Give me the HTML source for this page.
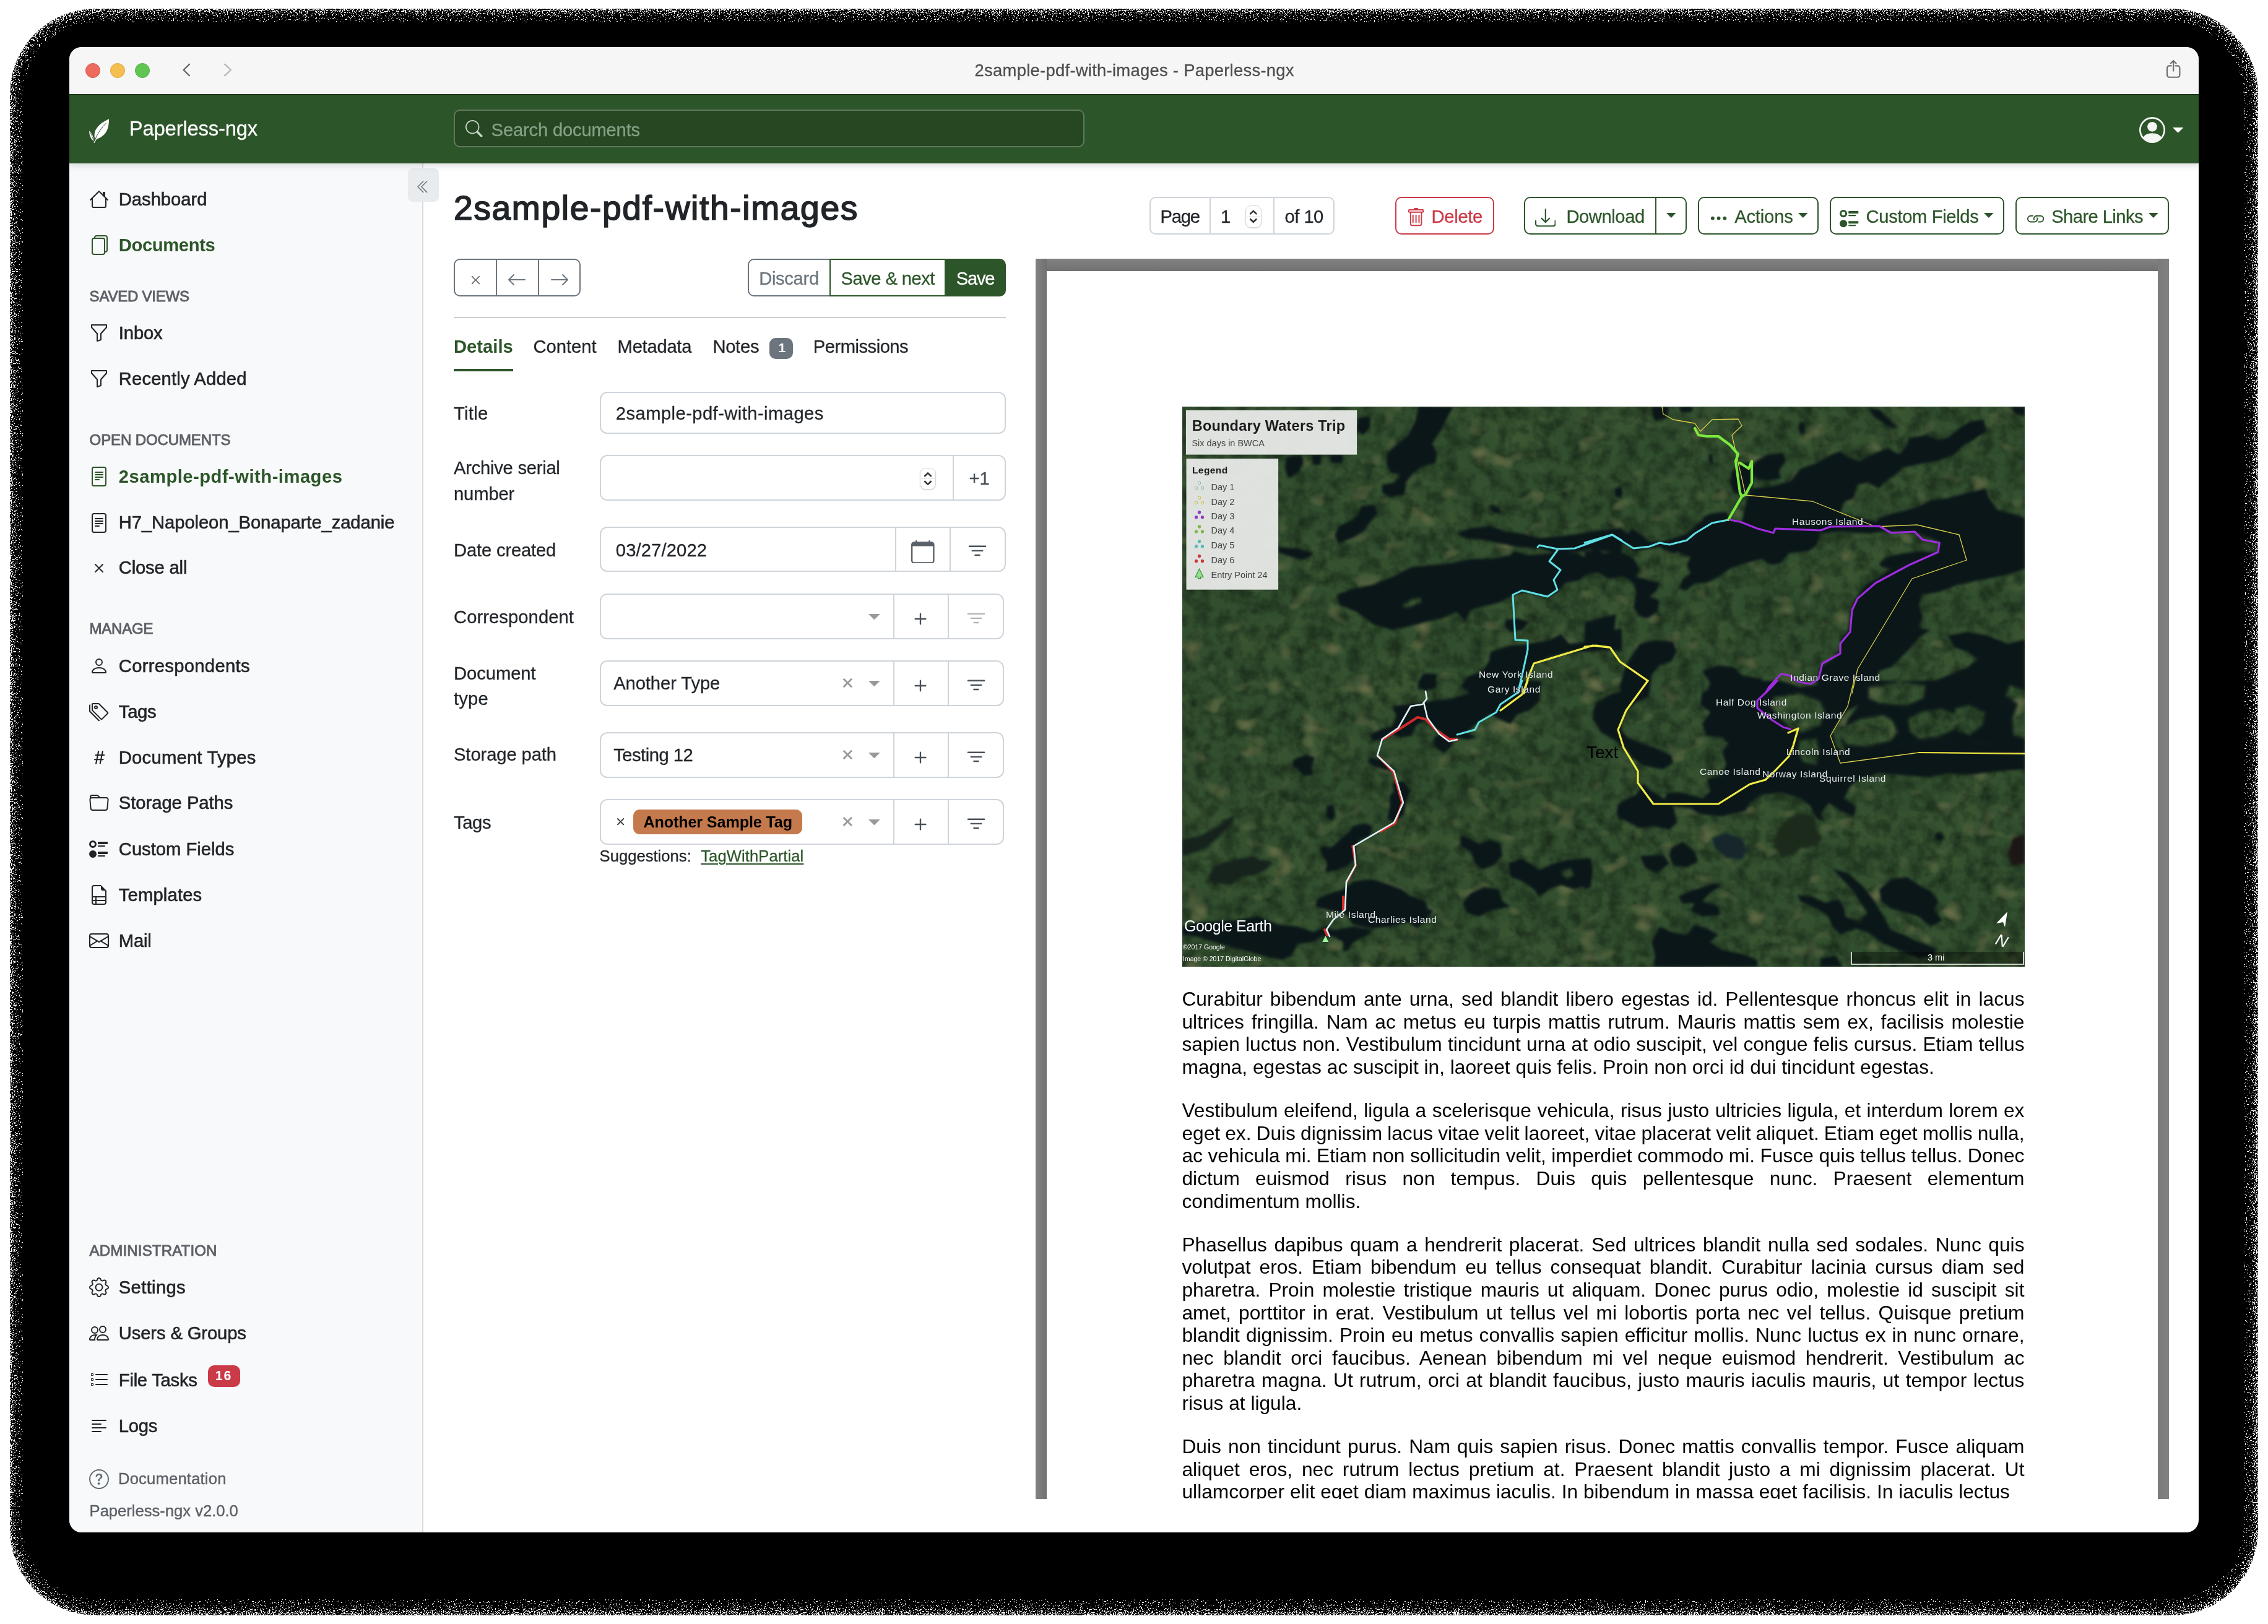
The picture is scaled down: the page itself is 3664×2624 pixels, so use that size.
<!DOCTYPE html>
<html><head><meta charset="utf-8"><title>2sample-pdf-with-images - Paperless-ngx</title><style>
*{margin:0;padding:0}
html,body{width:3664px;height:2624px;background:#fff;overflow:hidden}
body{font-family:"Liberation Sans",sans-serif;position:relative}
#sh{position:absolute;left:0;top:0;width:3664px;height:2624px}
#wo{position:absolute;left:112px;top:76px;width:3440px;height:2400px;border-radius:20px;overflow:hidden;background:#fff}
#win{position:absolute;left:0;top:0;width:1720px;height:1200px;zoom:2;will-change:transform}
.a{position:absolute;display:block}
.t{position:absolute;white-space:pre;line-height:20px}
.p{position:absolute;white-space:nowrap;font-size:15.85px;line-height:18px;height:18px;color:#000;overflow:visible}
svg text{font-family:"Liberation Sans",sans-serif}
</style></head><body>
<svg id="sh" viewBox="0 0 3664 2624"><defs><clipPath id="cp"><rect x="16" y="14" width="3632" height="2596" rx="138" ry="138"/></clipPath><filter id="dz" filterUnits="userSpaceOnUse" x="0" y="0" width="3664" height="2624" color-interpolation-filters="sRGB"><feGaussianBlur in="SourceAlpha" stdDeviation="10 11" result="b"/><feTurbulence type="fractalNoise" baseFrequency="0.55" numOctaves="2" seed="4" result="n"/><feColorMatrix in="n" type="matrix" values="0 0 0 0 0 0 0 0 0 0 0 0 0 0 0 2.600 0 0 0 -0.800" result="na"/><feComposite in="b" in2="na" operator="arithmetic" k1="0" k2="1" k3="1" k4="-1" result="s"/><feColorMatrix in="s" type="matrix" values="0 0 0 0 0 0 0 0 0 0 0 0 0 0 0 0 0 0 1000 0"/></filter></defs><g clip-path="url(#cp)"><rect x="16" y="14" width="3632" height="2596" rx="138" ry="138" fill="#000" filter="url(#dz)"/></g><rect x="37" y="36" width="3588" height="2548" rx="120" ry="120" fill="#000"/></svg>
<div id="wo"><div id="win">
<div class="a" style="left:0px;top:0px;width:1720px;height:38px;background:#f6f6f6"></div>
<div class="a" style="left:13px;top:13px;width:12px;height:12px;background:#ed6a5e;border-radius:50%;border:.5px solid #d8594d;box-sizing:border-box"></div>
<div class="a" style="left:33px;top:13px;width:12px;height:12px;background:#f5bf4f;border-radius:50%;border:.5px solid #dba841;box-sizing:border-box"></div>
<div class="a" style="left:53px;top:13px;width:12px;height:12px;background:#61c554;border-radius:50%;border:.5px solid #50ad42;box-sizing:border-box"></div>
<svg class="a" style="left:90.500px;top:12px;width:9px;height:15px" viewBox="0 0 9 15"><path d="M6.500 1.900L1.800 6.500l4.700 4.600" fill="none" stroke="#616161" stroke-width="1.150" stroke-linecap="round" stroke-linejoin="round"/></svg>
<svg class="a" style="left:123.500px;top:12px;width:9px;height:15px" viewBox="0 0 9 15"><path d="M2.100 1.900L7 6.500l-4.900 4.600" fill="none" stroke="#b4b4b4" stroke-width="1.150" stroke-linecap="round" stroke-linejoin="round"/></svg>
<span class="t" style="left:731.30px;top:8.80px;font-size:13.7px;color:#4d4d4d;letter-spacing:0.139px;-webkit-text-stroke:0.14px #4d4d4d;">2sample-pdf-with-images - Paperless-ngx</span>
<svg class="a" style="left:1692px;top:9px;width:15px;height:19px" viewBox="0 0 15 19"><path d="M5.900 6.200H4.200A1.700 1.700 0 0 0 2.500 7.900v5.750a1.700 1.700 0 0 0 1.700 1.700h6.800a1.700 1.700 0 0 0 1.700-1.700V7.900a1.700 1.700 0 0 0-1.700-1.700H9.300M7.600 10.300V2.300M5.400 4.200l2.200-2.200 2.200 2.200" fill="none" stroke="#6e6e6e" stroke-width="1.050" stroke-linecap="round" stroke-linejoin="round"/></svg>
<div class="a" style="left:0px;top:94px;width:286.2px;height:1106px;background:#f8f9fa;border-right:1px solid #d9dcdf;box-sizing:border-box"></div>
<svg class="a" style="left:16.0px;top:115.1px;width:16px;height:16px;" viewBox="0 0 16 16" fill="#212529"><path d="M8.707 1.5a1 1 0 0 0-1.414 0L.646 8.146a.5.5 0 0 0 .708.708L2 8.207V13.5A1.5 1.5 0 0 0 3.5 15h9a1.5 1.5 0 0 0 1.5-1.5V8.207l.646.647a.5.5 0 0 0 .708-.708L13 5.793V2.5a.5.5 0 0 0-.5-.5h-1a.5.5 0 0 0-.5.5v1.293L8.707 1.5ZM13 7.207V13.5a.5.5 0 0 1-.5.5h-9a.5.5 0 0 1-.5-.5V7.207l5-5 5 5Z"/></svg>
<span class="t" style="left:39.90px;top:113.00px;font-size:14.6px;color:#212529;letter-spacing:-0.012px;-webkit-text-stroke:0.3px #212529;">Dashboard</span>
<svg class="a" style="left:16.0px;top:152.0px;width:16px;height:16px;" viewBox="0 0 16 16" fill="#2c5529"><path d="M13 0H6a2 2 0 0 0-2 2 2 2 0 0 0-2 2v10a2 2 0 0 0 2 2h7a2 2 0 0 0 2-2 2 2 0 0 0 2-2V2a2 2 0 0 0-2-2zm0 13V4a2 2 0 0 0-2-2H5a1 1 0 0 1 1-1h7a1 1 0 0 1 1 1v10a1 1 0 0 1-1 1zM3 4a1 1 0 0 1 1-1h7a1 1 0 0 1 1 1v10a1 1 0 0 1-1 1H4a1 1 0 0 1-1-1V4z"/></svg>
<span class="t" style="left:39.90px;top:149.90px;font-size:14.6px;color:#2c5529;font-weight:700;letter-spacing:-0.185px;">Documents</span>
<span class="t" style="left:16.30px;top:191.30px;font-size:12.0px;color:#5d6167;letter-spacing:-0.109px;-webkit-text-stroke:0.45px #5d6167;">SAVED VIEWS</span>
<svg class="a" style="left:16.0px;top:223.1px;width:16px;height:16px;" viewBox="0 0 16 16" fill="#212529"><path d="M1.5 1.5A.5.5 0 0 1 2 1h12a.5.5 0 0 1 .5.5v2a.5.5 0 0 1-.128.334L10 8.692V13.5a.5.5 0 0 1-.342.474l-3 1A.5.5 0 0 1 6 14.5V8.692L1.628 3.834A.5.5 0 0 1 1.5 3.5v-2zm1 .5v1.308l4.372 4.858A.5.5 0 0 1 7 8.5v5.306l2-.666V8.5a.5.5 0 0 1 .128-.334L13.5 3.308V2h-11z"/></svg>
<span class="t" style="left:39.90px;top:221.00px;font-size:14.6px;color:#212529;letter-spacing:-0.061px;-webkit-text-stroke:0.3px #212529;">Inbox</span>
<svg class="a" style="left:16.0px;top:260.1px;width:16px;height:16px;" viewBox="0 0 16 16" fill="#212529"><path d="M1.5 1.5A.5.5 0 0 1 2 1h12a.5.5 0 0 1 .5.5v2a.5.5 0 0 1-.128.334L10 8.692V13.5a.5.5 0 0 1-.342.474l-3 1A.5.5 0 0 1 6 14.5V8.692L1.628 3.834A.5.5 0 0 1 1.5 3.5v-2zm1 .5v1.308l4.372 4.858A.5.5 0 0 1 7 8.5v5.306l2-.666V8.5a.5.5 0 0 1 .128-.334L13.5 3.308V2h-11z"/></svg>
<span class="t" style="left:39.90px;top:258.00px;font-size:14.6px;color:#212529;letter-spacing:0.083px;-webkit-text-stroke:0.3px #212529;">Recently Added</span>
<span class="t" style="left:16.30px;top:307.30px;font-size:12.0px;color:#5d6167;letter-spacing:-0.056px;-webkit-text-stroke:0.45px #5d6167;">OPEN DOCUMENTS</span>
<svg class="a" style="left:16.0px;top:339.20000000000005px;width:16px;height:16px;" viewBox="0 0 16 16" fill="#2c5529"><path d="M5 4a.5.5 0 0 0 0 1h6a.5.5 0 0 0 0-1H5zm-.5 2.5A.5.5 0 0 1 5 6h6a.5.5 0 0 1 0 1H5a.5.5 0 0 1-.5-.5zM5 8a.5.5 0 0 0 0 1h6a.5.5 0 0 0 0-1H5zm0 2a.5.5 0 0 0 0 1h3a.5.5 0 0 0 0-1H5z"/><path d="M2 2a2 2 0 0 1 2-2h8a2 2 0 0 1 2 2v12a2 2 0 0 1-2 2H4a2 2 0 0 1-2-2V2zm10-1H4a1 1 0 0 0-1 1v12a1 1 0 0 0 1 1h8a1 1 0 0 0 1-1V2a1 1 0 0 0-1-1z"/></svg>
<span class="t" style="left:39.90px;top:337.10px;font-size:14.6px;color:#2c5529;font-weight:700;letter-spacing:0.245px;">2sample-pdf-with-images</span>
<svg class="a" style="left:16.0px;top:376.3px;width:16px;height:16px;" viewBox="0 0 16 16" fill="#212529"><path d="M5 4a.5.5 0 0 0 0 1h6a.5.5 0 0 0 0-1H5zm-.5 2.5A.5.5 0 0 1 5 6h6a.5.5 0 0 1 0 1H5a.5.5 0 0 1-.5-.5zM5 8a.5.5 0 0 0 0 1h6a.5.5 0 0 0 0-1H5zm0 2a.5.5 0 0 0 0 1h3a.5.5 0 0 0 0-1H5z"/><path d="M2 2a2 2 0 0 1 2-2h8a2 2 0 0 1 2 2v12a2 2 0 0 1-2 2H4a2 2 0 0 1-2-2V2zm10-1H4a1 1 0 0 0-1 1v12a1 1 0 0 0 1 1h8a1 1 0 0 0 1-1V2a1 1 0 0 0-1-1z"/></svg>
<span class="t" style="left:39.90px;top:374.20px;font-size:14.6px;color:#212529;letter-spacing:-0.040px;-webkit-text-stroke:0.3px #212529;">H7_Napoleon_Bonaparte_zadanie</span>
<svg class="a" style="left:16.0px;top:412.8px;width:16px;height:16px;" viewBox="0 0 16 16" fill="#212529"><path d="M4.646 4.646a.5.5 0 0 1 .708 0L8 7.293l2.646-2.647a.5.5 0 0 1 .708.708L8.707 8l2.647 2.646a.5.5 0 0 1-.708.708L8 8.707l-2.646 2.647a.5.5 0 0 1-.708-.708L7.293 8 4.646 5.354a.5.5 0 0 1 0-.708z"/></svg>
<span class="t" style="left:39.90px;top:410.70px;font-size:14.6px;color:#212529;letter-spacing:-0.085px;-webkit-text-stroke:0.3px #212529;">Close all</span>
<span class="t" style="left:16.30px;top:460.20px;font-size:12.0px;color:#5d6167;letter-spacing:-0.119px;-webkit-text-stroke:0.45px #5d6167;">MANAGE</span>
<svg class="a" style="left:16.0px;top:492.1px;width:16px;height:16px;" viewBox="0 0 16 16" fill="#212529"><path d="M8 8a3 3 0 1 0 0-6 3 3 0 0 0 0 6Zm2-3a2 2 0 1 1-4 0 2 2 0 0 1 4 0Zm4 8c0 1-1 1-1 1H3s-1 0-1-1 1-4 6-4 6 3 6 4Zm-1-.004c-.001-.246-.154-.986-.832-1.664C11.516 10.68 10.289 10 8 10c-2.29 0-3.516.68-4.168 1.332-.678.678-.83 1.418-.832 1.664h10Z"/></svg>
<span class="t" style="left:39.90px;top:490.00px;font-size:14.6px;color:#212529;letter-spacing:0.154px;-webkit-text-stroke:0.3px #212529;">Correspondents</span>
<svg class="a" style="left:16.0px;top:528.9px;width:16px;height:16px;" viewBox="0 0 16 16" fill="#212529"><path d="M3 2v4.586l7 7L14.586 9l-7-7H3zM2 2a1 1 0 0 1 1-1h4.586a1 1 0 0 1 .707.293l7 7a1 1 0 0 1 0 1.414l-4.586 4.586a1 1 0 0 1-1.414 0l-7-7A1 1 0 0 1 2 6.586V2z"/><path d="M5.5 5a.5.5 0 1 1 0-1 .5.5 0 0 1 0 1zm0 1a1.5 1.5 0 1 0 0-3 1.5 1.5 0 0 0 0 3zM1 7.086a1 1 0 0 0 .293.707L8.75 15.25l-.043.043a1 1 0 0 1-1.414 0l-7-7A1 1 0 0 1 0 7.586V3a1 1 0 0 1 1-1v5.086z"/></svg>
<span class="t" style="left:39.90px;top:526.80px;font-size:14.6px;color:#212529;letter-spacing:-0.132px;-webkit-text-stroke:0.3px #212529;">Tags</span>
<svg class="a" style="left:16.0px;top:565.9px;width:16px;height:16px;" viewBox="0 0 16 16" fill="#212529"><path d="M8.39 12.648a1.32 1.32 0 0 0-.015.18c0 .305.21.508.5.508.266 0 .492-.172.555-.477l.554-2.703h1.204c.421 0 .617-.234.617-.547 0-.312-.188-.53-.617-.53h-.985l.516-2.524h1.265c.43 0 .618-.227.618-.547 0-.313-.188-.524-.618-.524h-1.046l.476-2.304a1.06 1.06 0 0 0 .016-.164.51.51 0 0 0-.516-.516.54.54 0 0 0-.539.43l-.523 2.554H7.617l.477-2.304c.008-.04.015-.118.015-.164a.512.512 0 0 0-.523-.516.539.539 0 0 0-.531.43L6.53 5.484H5.414c-.43 0-.617.22-.617.532 0 .312.187.539.617.539h.906l-.515 2.523H4.609c-.421 0-.609.219-.609.531 0 .313.188.547.61.547h.976l-.516 2.492c-.008.04-.015.125-.015.18 0 .305.21.508.5.508.265 0 .492-.172.554-.477l.555-2.703h2.242l-.515 2.492zm-1-6.109h2.266l-.515 2.563H6.859l.532-2.563z"/></svg>
<span class="t" style="left:39.90px;top:563.80px;font-size:14.6px;color:#212529;letter-spacing:0.118px;-webkit-text-stroke:0.3px #212529;">Document Types</span>
<svg class="a" style="left:16.0px;top:602.8000000000001px;width:16px;height:16px;" viewBox="0 0 16 16" fill="#212529"><path d="M.54 3.87.5 3a2 2 0 0 1 2-2h3.672a2 2 0 0 1 1.414.586l.828.828A2 2 0 0 0 9.828 3h3.982a2 2 0 0 1 1.992 2.181l-.637 7A2 2 0 0 1 13.174 14H2.826a2 2 0 0 1-1.991-1.819l-.637-7a1.99 1.99 0 0 1 .342-1.31zM2.19 4a1 1 0 0 0-.996 1.09l.637 7a1 1 0 0 0 .995.91h10.348a1 1 0 0 0 .995-.91l.637-7A1 1 0 0 0 13.81 4H2.19zm4.69-1.707A1 1 0 0 0 6.172 2H2.5a1 1 0 0 0-1 .981l.006.139C1.72 3.042 1.95 3 2.19 3h5.396l-.707-.707z"/></svg>
<span class="t" style="left:39.90px;top:600.70px;font-size:14.6px;color:#212529;letter-spacing:-0.015px;-webkit-text-stroke:0.3px #212529;">Storage Paths</span>
<svg class="a" style="left:16.0px;top:640.1px;width:16px;height:16px;" viewBox="0 0 16 16" fill="#212529"><path d="M7 2.5a.5.5 0 0 1 .5-.5h7a.5.5 0 0 1 .5.5v1a.5.5 0 0 1-.5.5h-7a.5.5 0 0 1-.5-.5v-1zM0 12a3 3 0 1 1 6 0 3 3 0 0 1-6 0zm7-1.5a.5.5 0 0 1 .5-.5h7a.5.5 0 0 1 .5.5v1a.5.5 0 0 1-.5.5h-7a.5.5 0 0 1-.5-.5v-1zm0-5a.5.5 0 0 1 .5-.5h5a.5.5 0 0 1 0 1h-5a.5.5 0 0 1-.5-.5zm0 8a.5.5 0 0 1 .5-.5h5a.5.5 0 0 1 0 1h-5a.5.5 0 0 1-.5-.5zM3 1a3 3 0 1 0 0 6 3 3 0 0 0 0-6zm0 4.500a1.500 1.500 0 1 1 0-3 1.500 1.500 0 0 1 0 3z"/></svg>
<span class="t" style="left:39.90px;top:638.00px;font-size:14.6px;color:#212529;letter-spacing:0.003px;-webkit-text-stroke:0.3px #212529;">Custom Fields</span>
<svg class="a" style="left:16.0px;top:677.1px;width:16px;height:16px;" viewBox="0 0 16 16" fill="#212529"><path d="M14 14V4.5L9.500 0H4a2 2 0 0 0-2 2v12a2 2 0 0 0 2 2h8a2 2 0 0 0 2-2zM9.500 3A1.500 1.500 0 0 0 11 4.500h2V9H3V2a1 1 0 0 1 1-1h5.500v2zM3 12v-2h2v2H3zm0 1h2v2H4a1 1 0 0 1-1-1v-1zm3 2v-2h7v1a1 1 0 0 1-1 1H6zm7-3H6v-2h7v2z"/></svg>
<span class="t" style="left:39.90px;top:675.00px;font-size:14.6px;color:#212529;letter-spacing:0.087px;-webkit-text-stroke:0.3px #212529;">Templates</span>
<svg class="a" style="left:16.0px;top:714.0px;width:16px;height:16px;" viewBox="0 0 16 16" fill="#212529"><path d="M0 4a2 2 0 0 1 2-2h12a2 2 0 0 1 2 2v8a2 2 0 0 1-2 2H2a2 2 0 0 1-2-2V4Zm2-1a1 1 0 0 0-1 1v.217l7 4.200 7-4.200V4a1 1 0 0 0-1-1H2Zm13 2.383-4.708 2.825L15 11.105V5.383Zm-.034 6.876-5.640-3.471L8 9.583l-1.326-.795-5.640 3.470A1 1 0 0 0 2 13h12a1 1 0 0 0 .966-.741ZM1 11.105l4.708-2.897L1 5.383v5.722Z"/></svg>
<span class="t" style="left:39.90px;top:711.90px;font-size:14.6px;color:#212529;letter-spacing:-0.116px;-webkit-text-stroke:0.3px #212529;">Mail</span>
<span class="t" style="left:16.30px;top:962.30px;font-size:12.0px;color:#5d6167;letter-spacing:0.087px;-webkit-text-stroke:0.45px #5d6167;">ADMINISTRATION</span>
<svg class="a" style="left:16.0px;top:994.1px;width:16px;height:16px;" viewBox="0 0 16 16" fill="#212529"><path d="M8 4.754a3.246 3.246 0 1 0 0 6.492 3.246 3.246 0 0 0 0-6.492zM5.754 8a2.246 2.246 0 1 1 4.492 0 2.246 2.246 0 0 1-4.492 0z"/><path d="M9.796 1.343c-.527-1.790-3.065-1.790-3.592 0l-.094.319a.873.873 0 0 1-1.255.520l-.292-.160c-1.640-.892-3.433.902-2.540 2.541l.159.292a.873.873 0 0 1-.520 1.255l-.319.094c-1.790.527-1.790 3.065 0 3.592l.319.094a.873.873 0 0 1 .520 1.255l-.160.292c-.892 1.640.901 3.434 2.541 2.540l.292-.159a.873.873 0 0 1 1.255.520l.094.319c.527 1.790 3.065 1.790 3.592 0l.094-.319a.873.873 0 0 1 1.255-.520l.292.160c1.640.893 3.434-.902 2.540-2.541l-.159-.292a.873.873 0 0 1 .520-1.255l.319-.094c1.790-.527 1.790-3.065 0-3.592l-.319-.094a.873.873 0 0 1-.520-1.255l.160-.292c.893-1.640-.902-3.433-2.541-2.540l-.292.159a.873.873 0 0 1-1.255-.520l-.094-.319zm-2.633.283c.246-.835 1.428-.835 1.674 0l.094.319a1.873 1.873 0 0 0 2.693 1.115l.291-.160c.764-.415 1.600.420 1.184 1.185l-.159.292a1.873 1.873 0 0 0 1.116 2.692l.318.094c.835.246.835 1.428 0 1.674l-.319.094a1.873 1.873 0 0 0-1.115 2.693l.160.291c.415.764-.420 1.600-1.185 1.184l-.291-.159a1.873 1.873 0 0 0-2.693 1.116l-.094.318c-.246.835-1.428.835-1.674 0l-.094-.319a1.873 1.873 0 0 0-2.692-1.115l-.292.160c-.764.415-1.600-.420-1.184-1.185l.159-.291A1.873 1.873 0 0 0 1.945 8.930l-.319-.094c-.835-.246-.835-1.428 0-1.674l.319-.094A1.873 1.873 0 0 0 3.060 4.377l-.160-.292c-.415-.764.420-1.600 1.185-1.184l.292.159a1.873 1.873 0 0 0 2.692-1.115l.094-.319z"/></svg>
<span class="t" style="left:39.90px;top:992.00px;font-size:14.6px;color:#212529;letter-spacing:0.171px;-webkit-text-stroke:0.3px #212529;">Settings</span>
<svg class="a" style="left:16.0px;top:1031.0px;width:16px;height:16px;" viewBox="0 0 16 16" fill="#212529"><path d="M15 14s1 0 1-1-1-4-5-4-5 3-5 4 1 1 1 1h8Zm-7.978-1A.261.261 0 0 1 7 12.996c.001-.264.167-1.030.760-1.720C8.312 10.629 9.282 10 11 10c1.717 0 2.687.630 3.240 1.276.593.690.758 1.457.760 1.720l-.008.002a.274.274 0 0 1-.014.002H7.022ZM11 7a2 2 0 1 0 0-4 2 2 0 0 0 0 4Zm3-2a3 3 0 1 1-6 0 3 3 0 0 1 6 0ZM6.936 9.280a5.880 5.880 0 0 0-1.230-.247A7.350 7.350 0 0 0 5 9c-4 0-5 3-5 4 0 .667.333 1 1 1h4.216A2.238 2.238 0 0 1 5 13c0-1.010.377-2.042 1.090-2.904.243-.294.526-.569.846-.816ZM4.920 10A5.493 5.493 0 0 0 4 13H1c0-.260.164-1.030.760-1.724.545-.636 1.492-1.256 3.160-1.275ZM1.500 5.500a3 3 0 1 1 6 0 3 3 0 0 1-6 0Zm3-2a2 2 0 1 0 0 4 2 2 0 0 0 0-4Z"/></svg>
<span class="t" style="left:39.90px;top:1028.90px;font-size:14.6px;color:#212529;letter-spacing:-0.058px;-webkit-text-stroke:0.3px #212529;">Users &amp; Groups</span>
<svg class="a" style="left:16.0px;top:1069.0px;width:16px;height:16px;" viewBox="0 0 16 16" fill="#212529"><path fill-rule="evenodd" d="M2 2.500a.500.500 0 0 0-.500.500v1a.500.500 0 0 0 .500.500h1a.500.500 0 0 0 .500-.500V3a.500.500 0 0 0-.500-.500H2zM3 3H2v1h1V3z"/><path d="M5 3.500a.500.500 0 0 1 .500-.500h9a.500.500 0 0 1 0 1h-9a.500.500 0 0 1-.500-.500zM5.500 7a.500.500 0 0 0 0 1h9a.500.500 0 0 0 0-1h-9zm0 4a.500.500 0 0 0 0 1h9a.500.500 0 0 0 0-1h-9z"/><path fill-rule="evenodd" d="M1.500 7a.500.500 0 0 1 .500-.500h1a.500.500 0 0 1 .500.500v1a.500.500 0 0 1-.500.500H2a.500.500 0 0 1-.500-.500V7zM2 7h1v1H2V7zm0 3.500a.500.500 0 0 0-.500.500v1a.500.500 0 0 0 .500.500h1a.500.500 0 0 0 .500-.500v-1a.500.500 0 0 0-.500-.500H2zm1 .500H2v1h1v-1z"/></svg>
<span class="t" style="left:39.90px;top:1066.90px;font-size:14.6px;color:#212529;letter-spacing:-0.121px;-webkit-text-stroke:0.3px #212529;">File Tasks</span>
<div class="a" style="left:112px;top:1065.1px;width:25.9px;height:17.2px;background:#cb3a47;border-radius:5px"></div>
<span class="t" style="left:117.90px;top:1063.60px;font-size:10.6px;color:#fff;font-weight:700;letter-spacing:0.902px;">16</span>
<svg class="a" style="left:16.0px;top:1106.1px;width:16px;height:16px;" viewBox="0 0 16 16" fill="#212529"><path fill-rule="evenodd" d="M2 12.500a.500.500 0 0 1 .500-.500h7a.500.500 0 0 1 0 1h-7a.500.500 0 0 1-.500-.500zm0-3a.500.500 0 0 1 .500-.500h11a.500.500 0 0 1 0 1h-11a.500.500 0 0 1-.500-.500zm0-3a.500.500 0 0 1 .500-.500h7a.500.500 0 0 1 0 1h-7a.500.500 0 0 1-.500-.500zm0-3a.500.500 0 0 1 .500-.500h11a.500.500 0 0 1 0 1h-11a.500.500 0 0 1-.500-.500z"/></svg>
<span class="t" style="left:39.90px;top:1104.00px;font-size:14.6px;color:#212529;letter-spacing:-0.139px;-webkit-text-stroke:0.3px #212529;">Logs</span>
<svg class="a" style="left:16.1px;top:1149.0px;width:16px;height:16px;" viewBox="0 0 16 16" fill="#5f6a72"><path d="M8 15A7 7 0 1 1 8 1a7 7 0 0 1 0 14zm0 1A8 8 0 1 0 8 0a8 8 0 0 0 0 16z"/><path d="M5.255 5.786a.237.237 0 0 0 .241.247h.825c.138 0 .248-.113.266-.250.090-.656.540-1.134 1.342-1.134.686 0 1.314.343 1.314 1.168 0 .635-.374.927-.965 1.371-.673.489-1.206 1.060-1.168 1.987l.003.217a.250.250 0 0 0 .250.246h.811a.250.250 0 0 0 .250-.250v-.105c0-.718.273-.927 1.010-1.486.609-.463 1.244-.977 1.244-2.056 0-1.511-1.276-2.241-2.673-2.241-1.267 0-2.655.590-2.750 2.286zm1.557 5.763c0 .533.425.927 1.010.927.609 0 1.028-.394 1.028-.927 0-.552-.420-.940-1.029-.940-.584 0-1.009.388-1.009.940z"/></svg>
<span class="t" style="left:39.50px;top:1146.50px;font-size:12.8px;color:#5a6066;letter-spacing:0.094px;-webkit-text-stroke:0.2px #5a6066;">Documentation</span>
<span class="t" style="left:16.30px;top:1172.50px;font-size:12.8px;color:#5a6066;letter-spacing:-0.006px;-webkit-text-stroke:0.2px #5a6066;">Paperless-ngx v2.0.0</span>
<div class="a" style="left:273.5px;top:97.9px;width:24.9px;height:26.9px;background:#e9ecef;border-radius:4px"></div>
<svg class="a" style="left:280.1px;top:107.2px;width:11.8px;height:11.8px;" viewBox="0 0 16 16" fill="#6c757d"><path fill-rule="evenodd" d="M8.354 1.646a.5.5 0 0 1 0 .708L2.707 8l5.647 5.646a.5.5 0 0 1-.708.708l-6-6a.5.5 0 0 1 0-.708l6-6a.5.5 0 0 1 .708 0z"/><path fill-rule="evenodd" d="M12.354 1.646a.5.5 0 0 1 0 .708L6.707 8l5.647 5.646a.5.5 0 0 1-.708.708l-6-6a.5.5 0 0 1 0-.708l6-6a.5.5 0 0 1 .708 0z"/></svg>
<span class="t" style="left:310.50px;top:120.20px;font-size:27.6px;color:#212529;letter-spacing:0.815px;-webkit-text-stroke:0.85px #212529;">2sample-pdf-with-images</span>
<div class="a" style="left:310.5px;top:171.0px;width:102.6px;height:30.7px;border:1px solid #6c757d;border-radius:5px;box-sizing:border-box"></div>
<div class="a" style="left:344.6px;top:171.0px;width:1px;height:30.7px;background:#6c757d"></div>
<div class="a" style="left:378.7px;top:171.0px;width:1px;height:30.7px;background:#6c757d"></div>
<svg class="a" style="left:320.7px;top:180.3px;width:15.5px;height:15.5px;" viewBox="0 0 16 16" fill="#6c757d"><path d="M4.646 4.646a.5.5 0 0 1 .708 0L8 7.293l2.646-2.647a.5.5 0 0 1 .708.708L8.707 8l2.647 2.646a.5.5 0 0 1-.708.708L8 8.707l-2.646 2.647a.5.5 0 0 1-.708-.708L7.293 8 4.646 5.354a.5.5 0 0 1 0-.708z"/></svg>
<svg class="a" style="left:353.5px;top:180.2px;width:16px;height:16px;" viewBox="0 0 16 16" fill="#6c757d"><path fill-rule="evenodd" d="M15 8a.5.5 0 0 0-.5-.5H2.707l3.147-3.146a.5.5 0 1 0-.708-.708l-4 4a.5.5 0 0 0 0 .708l4 4a.5.5 0 0 0 .708-.708L2.707 8.500H14.500A.5.5 0 0 0 15 8z"/></svg>
<svg class="a" style="left:387.8px;top:180.2px;width:16px;height:16px;" viewBox="0 0 16 16" fill="#6c757d"><path fill-rule="evenodd" d="M1 8a.5.5 0 0 1 .5-.5h11.793l-3.147-3.146a.5.5 0 0 1 .708-.708l4 4a.5.5 0 0 1 0 .708l-4 4a.5.5 0 0 1-.708-.708L13.293 8.500H1.500A.5.5 0 0 1 1 8z"/></svg>
<div class="a" style="left:548.2px;top:171.0px;width:67px;height:30.7px;border:1px solid #6c757d;border-radius:5px 0 0 5px;box-sizing:border-box"></div>
<div class="a" style="left:614.2px;top:171.0px;width:94px;height:30.7px;border:1px solid #2c5529;box-sizing:border-box"></div>
<div class="a" style="left:707.7px;top:171.0px;width:48.7px;height:30.7px;background:#2c5529;border-radius:0 5px 5px 0"></div>
<span class="t" style="left:557.10px;top:177.20px;font-size:14.6px;color:#6c757d;letter-spacing:-0.167px;-webkit-text-stroke:0.14px #6c757d;">Discard</span>
<span class="t" style="left:623.30px;top:177.20px;font-size:14.6px;color:#2c5529;letter-spacing:-0.282px;-webkit-text-stroke:0.14px #2c5529;">Save &amp; next</span>
<span class="t" style="left:716.40px;top:177.20px;font-size:14.6px;color:#fff;letter-spacing:-0.641px;-webkit-text-stroke:0.14px #fff;">Save</span>
<div class="a" style="left:310.5px;top:218.0px;width:445.9px;height:1px;background:#c9ced3"></div>
<span class="t" style="left:310.50px;top:232.00px;font-size:14.6px;color:#2c5529;font-weight:700;letter-spacing:0.006px;">Details</span>
<div class="a" style="left:310.5px;top:259.9px;width:47.9px;height:2px;background:#2c5529"></div>
<span class="t" style="left:374.70px;top:232.00px;font-size:14.6px;color:#212529;letter-spacing:-0.004px;-webkit-text-stroke:0.14px #212529;">Content</span>
<span class="t" style="left:442.80px;top:232.00px;font-size:14.6px;color:#212529;letter-spacing:-0.132px;-webkit-text-stroke:0.14px #212529;">Metadata</span>
<span class="t" style="left:519.70px;top:232.00px;font-size:14.6px;color:#212529;letter-spacing:-0.145px;-webkit-text-stroke:0.14px #212529;">Notes</span>
<div class="a" style="left:565.6px;top:235px;width:18.7px;height:16.8px;background:#6c757d;border-radius:5px"></div>
<span class="t" style="left:572.80px;top:233.20px;font-size:10.5px;color:#fff;font-weight:700;">1</span>
<span class="t" style="left:600.90px;top:232.00px;font-size:14.6px;color:#212529;letter-spacing:-0.253px;-webkit-text-stroke:0.14px #212529;">Permissions</span>
<span class="t" style="left:310.50px;top:286.00px;font-size:14.6px;color:#212529;letter-spacing:0.134px;-webkit-text-stroke:0.14px #212529;">Title</span>
<span class="t" style="left:310.50px;top:330.00px;font-size:14.6px;color:#212529;letter-spacing:-0.128px;-webkit-text-stroke:0.14px #212529;">Archive serial</span>
<span class="t" style="left:310.50px;top:351.20px;font-size:14.6px;color:#212529;letter-spacing:-0.064px;-webkit-text-stroke:0.14px #212529;">number</span>
<span class="t" style="left:310.50px;top:396.70px;font-size:14.6px;color:#212529;letter-spacing:-0.080px;-webkit-text-stroke:0.14px #212529;">Date created</span>
<span class="t" style="left:310.50px;top:450.40px;font-size:14.6px;color:#212529;letter-spacing:0.035px;-webkit-text-stroke:0.14px #212529;">Correspondent</span>
<span class="t" style="left:310.50px;top:496.10px;font-size:14.6px;color:#212529;letter-spacing:-0.027px;-webkit-text-stroke:0.14px #212529;">Document</span>
<span class="t" style="left:310.50px;top:516.70px;font-size:14.6px;color:#212529;letter-spacing:0.102px;-webkit-text-stroke:0.14px #212529;">type</span>
<span class="t" style="left:310.50px;top:561.70px;font-size:14.6px;color:#212529;letter-spacing:-0.048px;-webkit-text-stroke:0.14px #212529;">Storage path</span>
<span class="t" style="left:310.50px;top:616.40px;font-size:14.6px;color:#212529;letter-spacing:-0.182px;-webkit-text-stroke:0.14px #212529;">Tags</span>
<div class="a" style="left:428.3px;top:278.6px;width:328.09999999999997px;height:34px;border:1px solid #ced4da;border-radius:6px;box-sizing:border-box;background:#fff"></div>
<span class="t" style="left:441.40px;top:286.20px;font-size:14.6px;color:#212529;letter-spacing:0.216px;-webkit-text-stroke:0.14px #212529;">2sample-pdf-with-images</span>
<div class="a" style="left:428.3px;top:329.4px;width:328.09999999999997px;height:37.2px;border:1px solid #ced4da;border-radius:6px;box-sizing:border-box;background:#fff"></div>
<div class="a" style="left:713.6px;top:329.4px;width:1px;height:37.2px;background:#ced4da"></div>
<span class="t" style="left:726.70px;top:338.30px;font-size:14.6px;color:#495057;letter-spacing:-0.020px;-webkit-text-stroke:0.14px #495057;">+1</span>
<div class="a" style="left:687.3px;top:340.4px;width:12px;height:16.5px;border-radius:4px;background:#fff;box-shadow:0 0 0 .5px #d8d8d8,0 .5px 1.5px rgba(0,0,0,.25)"></div><svg class="a" style="left:687.3px;top:340.4px;width:12px;height:16.5px" viewBox="0 0 12 16.500"><path d="M3.600 6L6 3.700 8.400 6M3.600 10.500L6 12.800l2.400-2.300" fill="none" stroke="#333" stroke-width="1.300" stroke-linecap="round" stroke-linejoin="round"/><path d="M.5 8.250h11" stroke="#e4e4e4" stroke-width=".5"/></svg>
<div class="a" style="left:428.3px;top:387.6px;width:328.09999999999997px;height:36.6px;border:1px solid #ced4da;border-radius:6px;box-sizing:border-box;background:#fff"></div>
<div class="a" style="left:667.2px;top:387.6px;width:1px;height:36.6px;background:#ced4da"></div>
<div class="a" style="left:711px;top:387.6px;width:1px;height:36.6px;background:#ced4da"></div>
<span class="t" style="left:441.40px;top:396.60px;font-size:14.6px;color:#212529;letter-spacing:0.065px;-webkit-text-stroke:0.14px #212529;">03/27/2022</span>
<svg class="a" style="left:680.1px;top:398.3px;width:18.8px;height:18.8px;" viewBox="0 0 16 16" fill="#5a6169"><path d="M3.500 0a.5.5 0 0 1 .5.5V1h8V.5a.5.5 0 0 1 1 0V1h1a2 2 0 0 1 2 2v11a2 2 0 0 1-2 2H2a2 2 0 0 1-2-2V3a2 2 0 0 1 2-2h1V.5a.5.5 0 0 1 .5-.5zM1 4v10a1 1 0 0 0 1 1h12a1 1 0 0 0 1-1V4H1z"/></svg>
<svg class="a" style="left:724.2px;top:398.1px;width:19px;height:19px;" viewBox="0 0 16 16" fill="#495057"><path d="M6 10.500a.5.5 0 0 1 .5-.5h3a.5.5 0 0 1 0 1h-3a.5.5 0 0 1-.5-.5zm-2-3a.5.5 0 0 1 .5-.5h7a.5.5 0 0 1 0 1h-7a.5.5 0 0 1-.5-.5zm-2-3a.5.5 0 0 1 .5-.5h11a.5.5 0 0 1 0 1h-11a.5.5 0 0 1-.5-.5z"/></svg>
<div class="a" style="left:428.3px;top:441.5px;width:326.49999999999994px;height:37.2px;border:1px solid #ced4da;border-radius:6px;box-sizing:border-box;background:#fff"></div>
<div class="a" style="left:665.5px;top:441.5px;width:1px;height:37.2px;background:#ced4da"></div>
<div class="a" style="left:709.5px;top:441.5px;width:1px;height:37.2px;background:#ced4da"></div>
<svg class="a" style="left:645.6999999999999px;top:457.95px;width:9.4px;height:4.7px" viewBox="0 0 10 5"><path d="M0 0h10L5 5z" fill="#999"/></svg>
<svg class="a" style="left:678.0px;top:452.6px;width:19px;height:19px;" viewBox="0 0 16 16" fill="#495057"><path d="M8 4a.5.5 0 0 1 .5.5v3h3a.5.5 0 0 1 0 1h-3v3a.5.5 0 0 1-1 0v-3h-3a.5.5 0 0 1 0-1h3v-3A.5.5 0 0 1 8 4z"/></svg>
<svg class="a" style="left:723.1px;top:452.40000000000003px;width:19px;height:19px;" viewBox="0 0 16 16" fill="#b3b8bd"><path d="M6 10.500a.5.5 0 0 1 .5-.5h3a.5.5 0 0 1 0 1h-3a.5.5 0 0 1-.5-.5zm-2-3a.5.5 0 0 1 .5-.5h7a.5.5 0 0 1 0 1h-7a.5.5 0 0 1-.5-.5zm-2-3a.5.5 0 0 1 .5-.5h11a.5.5 0 0 1 0 1h-11a.5.5 0 0 1-.5-.5z"/></svg>
<div class="a" style="left:428.3px;top:495.4px;width:326.49999999999994px;height:37.2px;border:1px solid #ced4da;border-radius:6px;box-sizing:border-box;background:#fff"></div>
<div class="a" style="left:665.5px;top:495.4px;width:1px;height:37.2px;background:#ced4da"></div>
<div class="a" style="left:709.5px;top:495.4px;width:1px;height:37.2px;background:#ced4da"></div>
<svg class="a" style="left:645.6999999999999px;top:511.85px;width:9.4px;height:4.7px" viewBox="0 0 10 5"><path d="M0 0h10L5 5z" fill="#999"/></svg>
<svg class="a" style="left:678.0px;top:506.5px;width:19px;height:19px;" viewBox="0 0 16 16" fill="#495057"><path d="M8 4a.5.5 0 0 1 .5.5v3h3a.5.5 0 0 1 0 1h-3v3a.5.5 0 0 1-1 0v-3h-3a.5.5 0 0 1 0-1h3v-3A.5.5 0 0 1 8 4z"/></svg>
<svg class="a" style="left:723.1px;top:506.30000000000007px;width:19px;height:19px;" viewBox="0 0 16 16" fill="#495057"><path d="M6 10.500a.5.5 0 0 1 .5-.5h3a.5.5 0 0 1 0 1h-3a.5.5 0 0 1-.5-.5zm-2-3a.5.5 0 0 1 .5-.5h7a.5.5 0 0 1 0 1h-7a.5.5 0 0 1-.5-.5zm-2-3a.5.5 0 0 1 .5-.5h11a.5.5 0 0 1 0 1h-11a.5.5 0 0 1-.5-.5z"/></svg>
<svg class="a" style="left:624.3px;top:509.6px;width:8.400px;height:8.400px" viewBox="0 0 10 10"><path d="M1 1l8 8M9 1l-8 8" stroke="#999" stroke-width="1.700" fill="none"/></svg>
<span class="t" style="left:439.60px;top:503.90px;font-size:14.6px;color:#212529;letter-spacing:-0.046px;-webkit-text-stroke:0.14px #212529;">Another Type</span>
<div class="a" style="left:428.3px;top:553.4px;width:326.49999999999994px;height:37.2px;border:1px solid #ced4da;border-radius:6px;box-sizing:border-box;background:#fff"></div>
<div class="a" style="left:665.5px;top:553.4px;width:1px;height:37.2px;background:#ced4da"></div>
<div class="a" style="left:709.5px;top:553.4px;width:1px;height:37.2px;background:#ced4da"></div>
<svg class="a" style="left:645.6999999999999px;top:569.85px;width:9.4px;height:4.7px" viewBox="0 0 10 5"><path d="M0 0h10L5 5z" fill="#999"/></svg>
<svg class="a" style="left:678.0px;top:564.5px;width:19px;height:19px;" viewBox="0 0 16 16" fill="#495057"><path d="M8 4a.5.5 0 0 1 .5.5v3h3a.5.5 0 0 1 0 1h-3v3a.5.5 0 0 1-1 0v-3h-3a.5.5 0 0 1 0-1h3v-3A.5.5 0 0 1 8 4z"/></svg>
<svg class="a" style="left:723.1px;top:564.3000000000001px;width:19px;height:19px;" viewBox="0 0 16 16" fill="#495057"><path d="M6 10.500a.5.5 0 0 1 .5-.5h3a.5.5 0 0 1 0 1h-3a.5.5 0 0 1-.5-.5zm-2-3a.5.5 0 0 1 .5-.5h7a.5.5 0 0 1 0 1h-7a.5.5 0 0 1-.5-.5zm-2-3a.5.5 0 0 1 .5-.5h11a.5.5 0 0 1 0 1h-11a.5.5 0 0 1-.5-.5z"/></svg>
<svg class="a" style="left:624.3px;top:567.6px;width:8.400px;height:8.400px" viewBox="0 0 10 10"><path d="M1 1l8 8M9 1l-8 8" stroke="#999" stroke-width="1.700" fill="none"/></svg>
<span class="t" style="left:439.60px;top:562.00px;font-size:14.6px;color:#212529;letter-spacing:-0.253px;-webkit-text-stroke:0.14px #212529;">Testing 12</span>
<div class="a" style="left:428.3px;top:607.4px;width:326.49999999999994px;height:37.2px;border:1px solid #ced4da;border-radius:6px;box-sizing:border-box;background:#fff"></div>
<div class="a" style="left:665.5px;top:607.4px;width:1px;height:37.2px;background:#ced4da"></div>
<div class="a" style="left:709.5px;top:607.4px;width:1px;height:37.2px;background:#ced4da"></div>
<svg class="a" style="left:645.6999999999999px;top:623.85px;width:9.4px;height:4.7px" viewBox="0 0 10 5"><path d="M0 0h10L5 5z" fill="#999"/></svg>
<svg class="a" style="left:678.0px;top:618.5px;width:19px;height:19px;" viewBox="0 0 16 16" fill="#495057"><path d="M8 4a.5.5 0 0 1 .5.5v3h3a.5.5 0 0 1 0 1h-3v3a.5.5 0 0 1-1 0v-3h-3a.5.5 0 0 1 0-1h3v-3A.5.5 0 0 1 8 4z"/></svg>
<svg class="a" style="left:723.1px;top:618.3000000000001px;width:19px;height:19px;" viewBox="0 0 16 16" fill="#495057"><path d="M6 10.500a.5.5 0 0 1 .5-.5h3a.5.5 0 0 1 0 1h-3a.5.5 0 0 1-.5-.5zm-2-3a.5.5 0 0 1 .5-.5h7a.5.5 0 0 1 0 1h-7a.5.5 0 0 1-.5-.5zm-2-3a.5.5 0 0 1 .5-.5h11a.5.5 0 0 1 0 1h-11a.5.5 0 0 1-.5-.5z"/></svg>
<svg class="a" style="left:624.3px;top:621.6px;width:8.400px;height:8.400px" viewBox="0 0 10 10"><path d="M1 1l8 8M9 1l-8 8" stroke="#999" stroke-width="1.700" fill="none"/></svg>
<svg class="a" style="left:442.2px;top:622.7px;width:6.600px;height:6.600px" viewBox="0 0 10 10"><path d="M1 1l8 8M9 1l-8 8" stroke="#333" stroke-width="1.400" fill="none"/></svg>
<div class="a" style="left:455.7px;top:615.9px;width:136.3px;height:20px;background:#c47a4c;border-radius:5px"></div>
<span class="t" style="left:463.70px;top:616.10px;font-size:12.6px;color:#000;font-weight:700;letter-spacing:-0.068px;">Another Sample Tag</span>
<span class="t" style="left:428.30px;top:643.60px;font-size:12.8px;color:#212529;letter-spacing:0.008px;-webkit-text-stroke:0.14px #212529;">Suggestions:</span>
<span class="t" style="left:510.10px;top:643.60px;font-size:12.8px;color:#2c5529;letter-spacing:0.043px;-webkit-text-stroke:0.14px #2c5529;text-decoration:underline;text-underline-offset:1.500px;text-decoration-thickness:1px;">TagWithPartial</span>
<div class="a" style="left:872.5px;top:121.0px;width:149.70000000000005px;height:30.7px;border:1px solid #ced4da;border-radius:5px;box-sizing:border-box;"></div>
<div class="a" style="left:921px;top:121.0px;width:1px;height:30.7px;background:#ced4da"></div>
<div class="a" style="left:972.7px;top:121.0px;width:1px;height:30.7px;background:#ced4da"></div>
<span class="t" style="left:881.20px;top:126.90px;font-size:14.6px;color:#212529;letter-spacing:-0.598px;-webkit-text-stroke:0.14px #212529;">Page</span>
<span class="t" style="left:930.00px;top:126.90px;font-size:14.6px;color:#212529;-webkit-text-stroke:0.14px #212529;">1</span>
<div class="a" style="left:950.5px;top:128.6px;width:11.8px;height:16.8px;border-radius:4px;background:#fff;box-shadow:0 0 0 .5px #d8d8d8,0 .5px 1.5px rgba(0,0,0,.25)"></div><svg class="a" style="left:950.5px;top:128.6px;width:11.8px;height:16.8px" viewBox="0 0 12 16.500"><path d="M3.600 6L6 3.700 8.400 6M3.600 10.500L6 12.800l2.400-2.300" fill="none" stroke="#333" stroke-width="1.300" stroke-linecap="round" stroke-linejoin="round"/><path d="M.5 8.250h11" stroke="#e4e4e4" stroke-width=".5"/></svg>
<span class="t" style="left:981.80px;top:126.90px;font-size:14.6px;color:#212529;letter-spacing:-0.274px;-webkit-text-stroke:0.14px #212529;">of 10</span>
<div class="a" style="left:1070.8px;top:121.0px;width:80.0px;height:30.7px;border:1px solid #cb3a47;border-radius:5px;box-sizing:border-box;"></div>
<svg class="a" style="left:1079.8px;top:129.8px;width:15.6px;height:15.6px;" viewBox="0 0 16 16" fill="#cb3a47"><path d="M5.500 5.500A.5.5 0 0 1 6 6v6a.5.5 0 0 1-1 0V6a.5.5 0 0 1 .5-.5Zm2.500 0a.5.5 0 0 1 .5.5v6a.5.5 0 0 1-1 0V6a.5.5 0 0 1 .5-.5Zm3 .5a.5.5 0 0 0-1 0v6a.5.5 0 0 0 1 0V6Z"/><path d="M14.500 3a1 1 0 0 1-1 1H13v9a2 2 0 0 1-2 2H5a2 2 0 0 1-2-2V4h-.5a1 1 0 0 1-1-1V2a1 1 0 0 1 1-1H6a1 1 0 0 1 1-1h2a1 1 0 0 1 1 1h3.500a1 1 0 0 1 1 1v1ZM4.118 4 4 4.059V13a1 1 0 0 0 1 1h6a1 1 0 0 0 1-1V4.059L11.882 4H4.118ZM2.500 3h11V2h-11v1Z"/></svg>
<span class="t" style="left:1100.30px;top:126.90px;font-size:14.6px;color:#cb3a47;letter-spacing:-0.165px;-webkit-text-stroke:0.14px #cb3a47;">Delete</span>
<div class="a" style="left:1175.2px;top:121.0px;width:131.29999999999995px;height:30.7px;border:1px solid #2c5529;border-radius:5px;box-sizing:border-box;"></div>
<div class="a" style="left:1281px;top:121.0px;width:1px;height:30.7px;background:#2c5529"></div>
<svg class="a" style="left:1183.9px;top:129.3px;width:16.8px;height:16.8px;" viewBox="0 0 16 16" fill="#2c5529"><path d="M.5 9.900a.5.5 0 0 1 .5.5v2.500a1 1 0 0 0 1 1h12a1 1 0 0 0 1-1v-2.500a.5.5 0 0 1 1 0v2.500a2 2 0 0 1-2 2H2a2 2 0 0 1-2-2v-2.500a.5.5 0 0 1 .5-.5z"/><path d="M7.646 11.854a.5.5 0 0 0 .708 0l3-3a.5.5 0 0 0-.708-.708L8.500 10.293V1.500a.5.5 0 0 0-1 0v8.793L5.354 8.146a.5.5 0 1 0-.708.708l3 3z"/></svg>
<span class="t" style="left:1209.20px;top:126.90px;font-size:14.6px;color:#2c5529;letter-spacing:-0.213px;-webkit-text-stroke:0.14px #2c5529;">Download</span>
<svg class="a" style="left:1290.1px;top:134.0px;width:7.8px;height:4px" viewBox="0 0 10 5"><path d="M0 0h10L5 5z" fill="#2c5529"/></svg>
<div class="a" style="left:1315.5px;top:121.0px;width:97.59999999999991px;height:30.7px;border:1px solid #2c5529;border-radius:5px;box-sizing:border-box;"></div>
<svg class="a" style="left:1324.5px;top:130.3px;width:15.6px;height:15.6px;" viewBox="0 0 16 16" fill="#2c5529"><path d="M3 9.500a1.500 1.500 0 1 1 0-3 1.500 1.500 0 0 1 0 3zm5 0a1.500 1.500 0 1 1 0-3 1.500 1.500 0 0 1 0 3zm5 0a1.500 1.500 0 1 1 0-3 1.500 1.500 0 0 1 0 3z"/></svg>
<span class="t" style="left:1345.10px;top:126.90px;font-size:14.6px;color:#2c5529;letter-spacing:-0.094px;-webkit-text-stroke:0.14px #2c5529;">Actions</span>
<svg class="a" style="left:1396.6999999999998px;top:134.0px;width:7.8px;height:4px" viewBox="0 0 10 5"><path d="M0 0h10L5 5z" fill="#2c5529"/></svg>
<div class="a" style="left:1421.8px;top:121.0px;width:141.29999999999995px;height:30.7px;border:1px solid #2c5529;border-radius:5px;box-sizing:border-box;"></div>
<svg class="a" style="left:1430.0px;top:130.3px;width:16.2px;height:16.2px;" viewBox="0 0 16 16" fill="#2c5529"><path d="M7 2.5a.5.5 0 0 1 .5-.5h7a.5.5 0 0 1 .5.5v1a.5.5 0 0 1-.5.5h-7a.5.5 0 0 1-.5-.5v-1zM0 12a3 3 0 1 1 6 0 3 3 0 0 1-6 0zm7-1.5a.5.5 0 0 1 .5-.5h7a.5.5 0 0 1 .5.5v1a.5.5 0 0 1-.5.5h-7a.5.5 0 0 1-.5-.5v-1zm0-5a.5.5 0 0 1 .5-.5h5a.5.5 0 0 1 0 1h-5a.5.5 0 0 1-.5-.5zm0 8a.5.5 0 0 1 .5-.5h5a.5.5 0 0 1 0 1h-5a.5.5 0 0 1-.5-.5zM3 1a3 3 0 1 0 0 6 3 3 0 0 0 0-6zm0 4.500a1.500 1.500 0 1 1 0-3 1.500 1.500 0 0 1 0 3z"/></svg>
<span class="t" style="left:1451.30px;top:126.90px;font-size:14.6px;color:#2c5529;letter-spacing:-0.182px;-webkit-text-stroke:0.14px #2c5529;">Custom Fields</span>
<svg class="a" style="left:1546.5px;top:134.0px;width:7.8px;height:4px" viewBox="0 0 10 5"><path d="M0 0h10L5 5z" fill="#2c5529"/></svg>
<div class="a" style="left:1571.8px;top:121.0px;width:124.0px;height:30.7px;border:1px solid #2c5529;border-radius:5px;box-sizing:border-box;"></div>
<svg class="a" style="left:1580.6px;top:130.5px;width:15.6px;height:15.6px;" viewBox="0 0 16 16" fill="#2c5529"><path d="M6.354 5.500H4a3 3 0 0 0 0 6h3a3 3 0 0 0 2.830-4H9c-.086 0-.170.010-.250.031A2 2 0 0 1 7 10.500H4a2 2 0 1 1 0-4h1.535c.218-.376.495-.714.820-1z"/><path d="M9 5.500a3 3 0 0 0-2.830 4h1.098A2 2 0 0 1 9 6.500h3a2 2 0 1 1 0 4h-1.535a4.020 4.020 0 0 1-.820 1H12a3 3 0 1 0 0-6H9z"/></svg>
<span class="t" style="left:1601.10px;top:126.90px;font-size:14.6px;color:#2c5529;letter-spacing:-0.289px;-webkit-text-stroke:0.14px #2c5529;">Share Links</span>
<svg class="a" style="left:1679.3999999999999px;top:134.0px;width:7.8px;height:4px" viewBox="0 0 10 5"><path d="M0 0h10L5 5z" fill="#2c5529"/></svg>
<div class="a" style="left:780.6px;top:171.0px;width:915.2px;height:1001.8px;background:#808080;overflow:hidden">
<div class="a" style="left:0;top:0;width:915.2px;height:9.9px;background:linear-gradient(#828282,#717171)"></div>
<div class="a" style="left:0;top:0;width:8.700px;height:1001.8px;background:linear-gradient(90deg,#828282,#717171)"></div>
<div class="a" style="left:906.5px;top:0;width:8.700px;height:1001.8px;background:linear-gradient(90deg,#7b7b7b,#818181)"></div>
<div class="a" style="left:8.700px;top:9.900px;width:897.8000000000001px;height:1001.8px;background:#fff"></div>
<div class="a" style="left:118.39999999999998px;top:119.5px;width:680.5px;height:452.5px;overflow:hidden;background:#2c4628">
<svg viewBox="0 0 1361 905" preserveAspectRatio="none" style="position:absolute;left:0;top:0;width:100%;height:100%">
<defs><filter id="tx" color-interpolation-filters="sRGB" x="0" y="0" width="100%" height="100%"><feTurbulence type="fractalNoise" baseFrequency="0.010 0.014" numOctaves="3" seed="7" result="n"/><feColorMatrix in="n" type="matrix" values="0 0 0 0 0.27  0 0 0 0 0.37  0 0 0 0 0.21  0 1.300 0 0 -0.560"/></filter><filter id="tx2" color-interpolation-filters="sRGB" x="0" y="0" width="100%" height="100%"><feTurbulence type="fractalNoise" baseFrequency="0.045" numOctaves="3" seed="3" result="n"/><feColorMatrix in="n" type="matrix" values="0 0 0 0 0.10  0 0 0 0 0.17  0 0 0 0 0.10  1.800 0 0 0 -0.640"/></filter><filter id="tx3" color-interpolation-filters="sRGB" x="0" y="0" width="100%" height="100%"><feTurbulence type="fractalNoise" baseFrequency="0.022 0.03" numOctaves="2" seed="11" result="n"/><feColorMatrix in="n" type="matrix" values="0 0 0 0 0.42  0 0 0 0 0.44  0 0 0 0 0.29  0 0 3.200 0 -1.950"/></filter><filter id="bl"><feGaussianBlur stdDeviation="2"/></filter></defs>
<rect width="1361" height="905" fill="#314e2e"/>
<rect width="1361" height="905" filter="url(#tx)"/>
<rect width="1361" height="905" filter="url(#tx2)"/>
<rect width="1361" height="905" filter="url(#tx3)"/>
<mask id="wm" maskUnits="userSpaceOnUse" x="0" y="0" width="1361" height="905"><g filter="url(#bl)">
<path d="M382 0L438 0L425 24L415 43L403 59L412 75L409 91L387 97L371 110L361 123L361 132L358 142L336 146L323 139L323 126L342 123L352 110L336 107L330 94L331 75L346 62L365 46L376 24Z" fill="#fff" />
<path d="M168 81L193 78L196 91L187 107L171 116L166 100Z" fill="#fff" />
<path d="M209 78L225 78L223 94L211 94Z" fill="#fff" />
<path d="M238 78L260 78L258 91L241 91Z" fill="#fff" />
<path d="M284 18L304 16L303 34L292 46L282 37Z" fill="#fff" />
<path d="M288 161L311 159L315 173L304 186L295 199L276 212L253 221L246 208L253 193L276 183L285 173Z" fill="#fff" />
<path d="M155 227L187 229L212 237L206 243L193 248L168 240L155 235Z" fill="#fff" />
<path d="M444 205L466 196L498 193L523 202L549 205L577 212L609 210L641 205L673 200L710 196L710 237L688 234L657 231L638 234L609 237L593 234L580 229L542 227L514 221L482 215L457 213Z" fill="#fff" />
<path d="M250 304L276 294L307 288L339 275L371 259L403 256L434 253L466 246L498 246L530 240L536 234L561 240L593 237L612 234L638 237L657 246L682 237L710 240L710 275L688 278L673 269L657 269L641 281L619 285L606 300L593 307L574 304L555 300L536 304L514 316L485 323L466 329L457 348L444 332L419 342L393 348L371 354L339 361L307 351L282 332L253 320Z" fill="#fff" />
<path d="M523 345L542 342L561 348L549 361L530 364L520 354Z" fill="#fff" />
<path d="M498 396L530 386L561 383L593 377L612 367L625 383L657 380L688 364L710 358L710 396L688 393L657 396L625 396L593 405L571 415L561 427L549 440L530 450L498 459L466 463L450 453L460 437L485 427L495 412Z" fill="#fff" />
<path d="M390 431L412 432L409 446L396 459L380 456L384 440Z" fill="#fff" />
<path d="M698 132L710 129L710 148L700 146Z" fill="#fff" />
<path d="M495 158L511 164L517 173L501 170Z" fill="#fff" />
<path d="M758 0L787 0L783 18L764 24L760 15Z" fill="#fff" />
<path d="M802 0L825 0L823 8L806 10Z" fill="#fff" />
<path d="M926 88L945 78L971 75L974 88L964 104L967 116L945 120L926 116L920 100Z" fill="#fff" />
<path d="M888 104L904 91L920 91L923 110L920 132L910 142L891 139L885 123Z" fill="#fff" />
<path d="M999 100L1025 91L1047 78L1063 72L1075 81L1094 88L1120 75L1139 67L1158 77L1171 62L1174 51L1202 46L1221 54L1237 50L1253 37L1272 24L1294 21L1299 40L1279 53L1263 62L1247 78L1221 88L1190 93L1164 99L1152 110L1133 123L1126 132L1107 123L1091 126L1085 148L1069 154L1063 173L1031 177L999 170L967 161L936 154L913 145L920 132L952 129L983 120Z" fill="#fff" />
<path d="M802 237L821 224L840 205L853 189L840 180L853 173L879 170L885 183L904 186L913 145L1063 173L1120 186L1133 202L1110 205L1063 202L1031 205L1025 224L1012 234L980 237L967 253L952 256L936 246L910 253L885 262L866 275L847 285L828 285L815 297L802 294L809 278L821 269L815 256L821 243Z" fill="#fff" />
<path d="M650 202L669 202L682 199L701 202L707 196L720 205L726 196L739 205L755 218L777 218L796 212L815 205L828 193L847 180L853 189L840 205L821 224L809 234L793 237L771 227L745 231L729 234L723 224L707 221L688 218L669 224L650 227Z" fill="#fff" />
<path d="M650 234L669 231L682 237L698 234L713 237L729 246L739 262L733 275L745 278L771 285L767 297L755 307L771 313L767 332L752 342L739 339L729 326L733 300L729 285L713 275L691 269L682 256L669 259L660 269L650 266Z" fill="#fff" />
<path d="M650 348L675 342L701 335L698 358L701 386L650 389Z" fill="#fff" />
<path d="M1126 180L1145 173L1171 167L1190 161L1209 151L1237 148L1269 139L1298 132L1304 148L1317 167L1342 173L1361 180L1361 262L1342 269L1317 275L1285 281L1253 288L1221 300L1196 304L1190 320L1196 339L1190 358L1209 361L1190 373L1174 393L1158 408L1145 421L1126 427L1120 443L1107 463L1031 463L1025 443L1031 421L1050 408L1063 393L1063 377L1075 364L1079 332L1088 310L1104 288L1126 275L1145 262L1171 253L1196 243L1218 237L1225 221L1215 215L1190 205L1158 202L1133 202L1120 186Z" fill="#fff" />
<path d="M1126 253L1139 243L1164 237L1190 234L1218 235L1196 246L1171 253L1145 262L1129 259Z" fill="#fff" />
<path d="M739 383L764 377L793 380L799 396L790 412L771 418L758 434L755 463L710 463L707 453L713 427L726 402Z" fill="#fff" />
<path d="M840 427L866 418L891 421L904 434L936 440L955 463L847 463L853 446Z" fill="#fff" />
<path d="M1237 370L1269 364L1301 370L1333 383L1361 377L1361 463L1190 463L1209 446L1237 434L1269 421L1285 408L1269 396L1247 389Z" fill="#fff" />
<path d="M1107 2L1126 5L1145 24L1158 37L1139 31L1120 18Z" fill="#fff" />
<path d="M1339 0L1361 0L1361 15L1345 12Z" fill="#fff" />
<path d="M698 139L701 132L709 132L712 139L709 146L701 146Z" fill="#fff" />
<path d="M997 27L1001 24L1006 29L1005 42L999 45L996 37Z" fill="#fff" />
<path d="M850 78L856 75L858 94L852 91Z" fill="#fff" />
<path d="M669 478L691 465L723 456L752 459L755 468L733 478L713 497L707 519L720 535L745 545L771 554L790 564L793 576L777 586L745 580L726 567L710 545L698 526L682 529L669 513L663 494Z" fill="#fff" />
<path d="M840 462L872 449L904 443L967 443L999 453L1031 449L1063 443L1120 443L1107 462L1094 481L1075 491L1063 506L1050 526L1056 548L1075 564L1126 554L1190 541L1253 538L1317 545L1361 548L1361 586L1317 589L1269 595L1237 592L1206 599L1158 595L1126 592L1094 602L1079 614L1069 633L1088 646L1085 662L1063 653L1044 640L1031 659L1040 672L1025 665L1015 646L999 633L967 624L936 627L917 640L910 653L872 662L840 659L821 649L796 646L777 640L783 624L809 624L840 633L853 621L847 602L872 595L879 576L872 557L882 545L872 535L847 532L840 513L853 494L837 481Z" fill="#fff" />
<path d="M1088 443L1361 443L1361 548L1317 545L1253 538L1190 541L1126 554L1075 564L1063 538L1075 506L1094 481Z" fill="#fff" />
<path d="M707 640L733 627L745 608L758 621L777 633L793 646L799 672L787 684L764 678L739 681L713 668L701 656Z" fill="#fff" />
<path d="M739 726L777 724L787 738L767 753L748 745Z" fill="#fff" />
<path d="M790 713L809 703L828 719L833 735L815 745L793 741L787 726Z" fill="#fff" />
<path d="M802 792L828 780L860 770L872 773L853 786L840 799L866 808L869 821L840 824L821 814L828 802L809 802Z" fill="#fff" />
<path d="M1050 746L1075 754L1101 776L1120 802L1133 824L1145 846L1164 853L1190 865L1218 875L1215 887L1190 891L1158 878L1133 868L1107 849L1088 843L1063 853L1050 840L1044 824L1025 811L999 799L993 789L1018 792L1040 802L1060 795L1069 808L1072 824L1094 833L1107 818L1094 799L1082 780L1063 760Z" fill="#fff" />
<path d="M1126 780L1145 764L1171 760L1190 773L1209 783L1221 799L1215 814L1228 830L1209 840L1190 824L1171 818L1145 811L1129 799Z" fill="#fff" />
<path d="M771 840L790 849L815 853L828 837L847 843L866 853L853 865L872 878L904 884L929 894L929 905L761 905L764 887L758 865Z" fill="#fff" />
<path d="M650 729L660 730L663 748L660 776L650 780Z" fill="#fff" />
<path d="M1217 689L1226 688L1231 697L1225 702L1216 699Z" fill="#fff" />
<path d="M1031 891L1056 887L1066 905L1031 905Z" fill="#fff" />
<path d="M339 484L358 481L390 478L403 475L434 472L466 462L498 456L530 443L580 443L577 475L561 491L542 497L530 513L514 506L498 497L479 510L460 526L476 535L460 538L441 535L434 551L422 560L406 548L406 535L422 526L403 519L393 506L377 516L371 532L352 535L339 529L320 538L307 541L304 529L320 522L339 516L346 500Z" fill="#fff" />
<path d="M380 443L412 443L409 456L384 457Z" fill="#fff" />
<path d="M180 570L200 562L214 567L209 583L212 595L196 597L187 586L177 580Z" fill="#fff" />
<path d="M304 567L320 570L339 583L349 589L327 587L307 580L300 573Z" fill="#fff" />
<path d="M339 608L358 605L368 621L361 640L358 659L342 672L331 665L336 646L334 630L342 621Z" fill="#fff" />
<path d="M233 646L244 643L247 659L241 670L233 662Z" fill="#fff" />
<path d="M276 678L295 673L307 678L303 694L288 700L279 710L282 729L269 741L250 749L231 753L234 738L225 722L222 710L241 713L257 697L269 687Z" fill="#fff" />
<path d="M231 789L260 780L276 767L307 764L327 770L355 780L365 789L393 799L396 811L406 814L396 827L380 843L365 833L339 840L307 843L276 837L263 818L238 814L215 808L219 795Z" fill="#fff" />
<path d="M0 840L28 833L85 830L123 824L155 837L187 840L212 849L231 840L244 846L276 840L307 846L295 856L276 865L269 878L260 881L260 865L244 856L225 856L212 865L187 868L177 887L161 894L130 887L85 875L53 865L22 856L0 853Z" fill="#fff" />
<path d="M450 694L463 697L479 706L498 700L514 706L517 726L504 741L485 748L473 738L466 719L450 710Z" fill="#fff" />
<path d="M527 738L549 730L561 738L577 748L600 738L625 732L657 730L660 748L657 773L634 780L612 773L593 780L577 792L568 780L549 767L530 760Z" fill="#fff" />
<path d="M466 786L488 776L511 780L517 799L530 808L498 814L479 824L460 818L453 802Z" fill="#fff" />
<path d="M669 481L688 468L710 462L710 548L698 538L676 526L663 503Z" fill="#fff" />
<path d="M703 643L710 641L710 672L704 665Z" fill="#fff" />
<path d="M355 320L368 310L385 308L387 316L371 324L358 326Z" fill="#000" />
<path d="M955 468L999 462L1031 475L1040 494L1031 516L999 529L980 519L961 500L948 484Z" fill="#000" />
<path d="M996 538L1025 535L1031 557L1025 580L1002 576L993 557Z" fill="#000" />
<path d="M1107 453L1158 443L1202 449L1199 472L1171 484L1126 481L1107 472Z" fill="#000" />
<path d="M1066 519L1094 503L1133 497L1148 506L1158 526L1145 541L1107 551L1072 548L1063 535Z" fill="#000" />
<path d="M1171 503L1196 491L1228 487L1253 497L1250 522L1221 535L1190 538L1174 526Z" fill="#000" />
<path d="M1247 487L1272 481L1298 494L1294 516L1272 532L1253 526L1250 506Z" fill="#000" />
<path d="M1336 449L1361 456L1361 538L1342 532L1339 506L1348 481L1329 468Z" fill="#000" />
<path d="M612 748L628 745L634 757L622 764L612 759Z" fill="#000" />
</g></mask>
<rect width="1361" height="905" fill="#0b1619" mask="url(#wm)"/>
<g filter="url(#bl)">
<path d="M856 697L879 689L904 697L913 716L904 732L879 729L860 713Z" fill="#12262b" />
<path d="M961 684L980 665L999 656L1021 662L1025 684L1034 697L1025 710L999 713L987 726L967 726L955 710Z" fill="#1a2a1c" />
<path d="M1342 697L1361 691L1361 738L1339 741L1333 722Z" fill="#1d1412" />
<path d="M0 700L28 694L53 681L76 665L85 659L79 675L60 694L38 713L15 722L0 726Z" fill="#12201c" />
<path d="M53 741L85 732L114 726L123 732L146 735L136 748L117 757L95 760L79 773L53 770L41 767L47 751Z" fill="#12201c" />
</g>
<path d="M775 0L777 12L793 21L828 27L837 40L856 21L898 20L904 31L888 46L910 143L1018 153L1120 194L1187 191L1255 207L1267 248L1179 278L1091 424L1082 463" fill="none" stroke="#d9cf4a" stroke-width="1.3" stroke-linejoin="round" stroke-linecap="round" />
<path d="M1085 443L1075 484L1047 532L1063 576L1190 559L1361 560" fill="none" stroke="#d9cf4a" stroke-width="1.3" stroke-linejoin="round" stroke-linecap="round" />
<path d="M1190 559L1361 561" fill="none" stroke="#e8e23c" stroke-width="2" stroke-linejoin="round" stroke-linecap="round" />
<path d="M979 527L995 520L987 548L980 565L955 591L942 603L917 610L866 642L761 642L736 608L736 589L713 551L704 522L717 491L752 443" fill="none" stroke="#f2ec45" stroke-width="3.2" stroke-linejoin="round" stroke-linecap="round" />
<path d="M752 443L707 412L691 389L669 386L650 388" fill="none" stroke="#f2ec45" stroke-width="3.2" stroke-linejoin="round" stroke-linecap="round" />
<path d="M688 389L663 386L568 415L558 440L552 463" fill="none" stroke="#f2ec45" stroke-width="3.2" stroke-linejoin="round" stroke-linecap="round" />
<path d="M558 443L549 465L514 491" fill="none" stroke="#f2ec45" stroke-width="3.2" stroke-linejoin="round" stroke-linecap="round" />
<path d="M574 227L577 224L606 230L634 229L695 207L710 216" fill="none" stroke="#5fe0e6" stroke-width="3" stroke-linejoin="round" stroke-linecap="round" />
<path d="M606 232L593 250L611 264L600 280L606 296L590 307L549 297L534 304L538 377L558 378L558 393L549 434L542 463" fill="none" stroke="#5fe0e6" stroke-width="3" stroke-linejoin="round" stroke-linecap="round" />
<path d="M549 443L542 462L514 481L507 494L479 510L473 522L444 530" fill="none" stroke="#5fe0e6" stroke-width="3" stroke-linejoin="round" stroke-linecap="round" />
<path d="M650 220L694 207L729 229L755 226L771 220L787 223L815 216L828 205L856 188L882 183" fill="none" stroke="#5fe0e6" stroke-width="3" stroke-linejoin="round" stroke-linecap="round" />
<path d="M882 183L904 145L901 139L894 88L898 77L885 62L866 48L847 48L834 46L828 35" fill="none" stroke="#7bea3f" stroke-width="4.2" stroke-linejoin="round" stroke-linecap="round" />
<path d="M904 145L910 142L920 123L920 88L915 100L901 91" fill="none" stroke="#7bea3f" stroke-width="4.2" stroke-linejoin="round" stroke-linecap="round" />
<path d="M885 183L901 186L929 197L955 204L958 197L1031 200L1047 194L1126 193L1145 204L1183 202L1196 215L1223 220L1221 235L1174 256L1120 285L1091 310L1082 329L1079 364L1063 383L1063 399L1034 415L1028 440L1015 448L996 445L980 434L967 432L948 453L942 463" fill="none" stroke="#a02ce0" stroke-width="3.2" stroke-linejoin="round" stroke-linecap="round" />
<path d="M961 443L952 453L929 475L929 487L952 506L971 518L982 521" fill="none" stroke="#a02ce0" stroke-width="3.2" stroke-linejoin="round" stroke-linecap="round" />
<path d="M323 538L349 522L380 502L393 505L409 522L431 537L444 538" fill="none" stroke="#d42a2a" stroke-width="4" stroke-linejoin="round" stroke-linecap="round" />
<path d="M317 565L341 591L355 640L344 673L320 687" fill="none" stroke="#d42a2a" stroke-width="3.5" stroke-linejoin="round" stroke-linecap="round" />
<path d="M275 710L280 741L266 768" fill="none" stroke="#d42a2a" stroke-width="3.5" stroke-linejoin="round" stroke-linecap="round" />
<path d="M260 792L260 813" fill="none" stroke="#d42a2a" stroke-width="4" stroke-linejoin="round" stroke-linecap="round" />
<path d="M230 845L234 854" fill="none" stroke="#d42a2a" stroke-width="4" stroke-linejoin="round" stroke-linecap="round" />
<path d="M393 460L395 472L388 481L369 484L349 519L323 537L315 564L342 589L357 640L342 672L277 710L280 741L265 768L263 813L244 829L233 845L238 856" fill="none" stroke="#dff4f8" stroke-width="2.6" stroke-linejoin="round" stroke-linecap="round" />
<path d="M390 478L396 503L415 529L431 541L444 538" fill="none" stroke="#dff4f8" stroke-width="2.6" stroke-linejoin="round" stroke-linecap="round" />
<text x="985" y="191" font-size="15.5" fill="#e8eef0" stroke="#10181a" stroke-width=".4" paint-order="stroke" letter-spacing=".6">Hausons Island</text>
<text x="982" y="443" font-size="15.5" fill="#e8eef0" stroke="#10181a" stroke-width=".4" paint-order="stroke" letter-spacing=".6">Indian Grave Island</text>
<text x="479" y="438" font-size="15.5" fill="#e8eef0" stroke="#10181a" stroke-width=".4" paint-order="stroke" letter-spacing=".6">New York Island</text>
<text x="493" y="462" font-size="15.5" fill="#e8eef0" stroke="#10181a" stroke-width=".4" paint-order="stroke" letter-spacing=".6">Gary Island</text>
<text x="862" y="483" font-size="15.5" fill="#e8eef0" stroke="#10181a" stroke-width=".4" paint-order="stroke" letter-spacing=".6">Half Dog Island</text>
<text x="929" y="504" font-size="15.5" fill="#e8eef0" stroke="#10181a" stroke-width=".4" paint-order="stroke" letter-spacing=".6">Washington Island</text>
<text x="976" y="563" font-size="15.5" fill="#e8eef0" stroke="#10181a" stroke-width=".4" paint-order="stroke" letter-spacing=".6">Lincoln Island</text>
<text x="836" y="595" font-size="15.5" fill="#e8eef0" stroke="#10181a" stroke-width=".4" paint-order="stroke" letter-spacing=".6">Canoe Island</text>
<text x="937" y="599" font-size="15.5" fill="#e8eef0" stroke="#10181a" stroke-width=".4" paint-order="stroke" letter-spacing=".6">Norway Island</text>
<text x="1029" y="606" font-size="15.5" fill="#e8eef0" stroke="#10181a" stroke-width=".4" paint-order="stroke" letter-spacing=".6">Squirrel Island</text>
<text x="232" y="826" font-size="15.5" fill="#e8eef0" stroke="#10181a" stroke-width=".4" paint-order="stroke" letter-spacing=".6">Mile Island</text>
<text x="300" y="834" font-size="15.5" fill="#e8eef0" stroke="#10181a" stroke-width=".4" paint-order="stroke" letter-spacing=".6">Charlies Island</text>
<text x="653" y="568" font-size="28" fill="#000">Text</text>
<text x="3" y="848" font-size="25" fill="#fff" letter-spacing="-.5">Google Earth</text>
<text x="1" y="877" font-size="10.500" fill="#fff">©2017 Google</text>
<text x="1" y="896" font-size="10.500" fill="#fff">Image © 2017 DigitalGlobe</text>
<rect x="1081" y="881" width="277" height="20" fill="rgba(0,0,0,.35)"/>
<path d="M1081 881V901H1359V881" fill="none" stroke="#fff" stroke-width="1.500"/>
<text x="1204" y="895" font-size="14.500" fill="#fff">3 mi</text>
<text x="1312" y="868" font-size="26" fill="#fff" font-style="italic" font-family="Liberation Serif" transform="rotate(20 1312 868)">N</text>
<path d="M1333 816L1315 835L1326 833L1329 841Z" fill="#fff"/>
<rect x="5.9" y="5.9" width="276.2" height="71.7" fill="#e6e8e6" fill-opacity=".96"/>
<text x="15.7" y="38.6" font-size="23.500" font-weight="700" fill="#1a1a1a" textLength="247.3" lengthAdjust="spacing">Boundary Waters Trip</text>
<text x="15.4" y="64.0" font-size="14.500" fill="#444" textLength="117.5" lengthAdjust="spacing">Six days in BWCA</text>
<rect x="6.5" y="84.0" width="148.6" height="211.7" fill="#e6e8e6" fill-opacity=".96"/>
<text x="16.0" y="107.8" font-size="15.500" font-weight="700" fill="#1a1a1a" textLength="57.1" lengthAdjust="spacing">Legend</text>
<text x="46.5" y="134.7" font-size="14.500" fill="#444">Day 1</text>
<circle cx="27.5" cy="123.5" r="2.300" fill="none" stroke="#8ab6b6" stroke-width="1"/>
<circle cx="22.5" cy="131.5" r="2.300" fill="none" stroke="#8ab6b6" stroke-width="1"/>
<circle cx="32.5" cy="131.5" r="2.300" fill="none" stroke="#8ab6b6" stroke-width="1"/>
<text x="46.5" y="158.6" font-size="14.500" fill="#444">Day 2</text>
<circle cx="27.5" cy="147.3" r="2.300" fill="none" stroke="#c9c04a" stroke-width="1"/>
<circle cx="22.5" cy="155.3" r="2.300" fill="none" stroke="#c9c04a" stroke-width="1"/>
<circle cx="32.5" cy="155.3" r="2.300" fill="none" stroke="#c9c04a" stroke-width="1"/>
<text x="46.5" y="182.0" font-size="14.500" fill="#444">Day 3</text>
<circle cx="27.5" cy="170.8" r="2.300" fill="#8a3cc0" stroke="#8a3cc0" stroke-width="1"/>
<circle cx="22.5" cy="178.8" r="2.300" fill="#8a3cc0" stroke="#8a3cc0" stroke-width="1"/>
<circle cx="32.5" cy="178.8" r="2.300" fill="#8a3cc0" stroke="#8a3cc0" stroke-width="1"/>
<text x="46.5" y="205.2" font-size="14.500" fill="#444">Day 4</text>
<circle cx="27.5" cy="194.0" r="2.300" fill="#7fb64a" stroke="#7fb64a" stroke-width="1"/>
<circle cx="22.5" cy="202.0" r="2.300" fill="#7fb64a" stroke="#7fb64a" stroke-width="1"/>
<circle cx="32.5" cy="202.0" r="2.300" fill="#7fb64a" stroke="#7fb64a" stroke-width="1"/>
<text x="46.5" y="229.0" font-size="14.500" fill="#444">Day 5</text>
<circle cx="27.5" cy="217.8" r="2.300" fill="#5ab8b8" stroke="#5ab8b8" stroke-width="1"/>
<circle cx="22.5" cy="225.8" r="2.300" fill="#5ab8b8" stroke="#5ab8b8" stroke-width="1"/>
<circle cx="32.5" cy="225.8" r="2.300" fill="#5ab8b8" stroke="#5ab8b8" stroke-width="1"/>
<text x="46.5" y="252.8" font-size="14.500" fill="#444">Day 6</text>
<circle cx="27.5" cy="241.6" r="2.300" fill="#c83a3a" stroke="#c83a3a" stroke-width="1"/>
<circle cx="22.5" cy="249.6" r="2.300" fill="#c83a3a" stroke="#c83a3a" stroke-width="1"/>
<circle cx="32.5" cy="249.6" r="2.300" fill="#c83a3a" stroke="#c83a3a" stroke-width="1"/>
<text x="46.5" y="276.7" font-size="14.500" fill="#444">Entry Point 24</text>
<path d="M27.5 262.3l6.500 13h-4.500v2.500h-4v-2.500h-4.500z" fill="#8fe08f" stroke="#3c8a3c" stroke-width="1.200"/>
<path d="M231.3 855.0l5 10h-10z" fill="#9df59d"/>
</svg>
</div>
<div class="p" style="left:118.15px;top:589.10px;word-spacing:1.601px;">Curabitur bibendum ante urna, sed blandit libero egestas id. Pellentesque rhoncus elit in lacus</div>
<div class="p" style="left:118.15px;top:607.39px;word-spacing:1.503px;">ultrices fringilla. Nam ac metus eu turpis mattis rutrum. Mauris mattis sem ex, facilisis molestie</div>
<div class="p" style="left:118.15px;top:625.68px;word-spacing:0.170px;">sapien luctus non. Vestibulum tincidunt urna at odio suscipit, vel congue felis cursus. Etiam tellus</div>
<div class="p" style="left:118.15px;top:643.97px;">magna, egestas ac suscipit in, laoreet quis felis. Proin non orci id dui tincidunt egestas.</div>
<div class="p" style="left:118.15px;top:679.12px;word-spacing:0.320px;">Vestibulum eleifend, ligula a scelerisque vehicula, risus justo ultricies ligula, et interdum lorem ex</div>
<div class="p" style="left:118.15px;top:697.41px;word-spacing:-0.368px;">eget ex. Duis dignissim lacus vitae velit laoreet, vitae placerat velit aliquet. Etiam eget mollis nulla,</div>
<div class="p" style="left:118.15px;top:715.70px;word-spacing:-0.140px;">ac vehicula mi. Etiam non sollicitudin velit, imperdiet commodo mi. Fusce quis tellus tellus. Donec</div>
<div class="p" style="left:118.15px;top:733.99px;word-spacing:8.252px;">dictum euismod risus non tempus. Duis quis pellentesque nunc. Praesent elementum</div>
<div class="p" style="left:118.15px;top:752.28px;">condimentum mollis.</div>
<div class="p" style="left:118.15px;top:787.43px;word-spacing:1.399px;">Phasellus dapibus quam a hendrerit placerat. Sed ultrices blandit nulla sed sodales. Nunc quis</div>
<div class="p" style="left:118.15px;top:805.72px;word-spacing:2.618px;">volutpat eros. Etiam bibendum eu tellus consequat blandit. Curabitur lacinia cursus diam sed</div>
<div class="p" style="left:118.15px;top:824.01px;word-spacing:2.151px;">pharetra. Proin molestie tristique mauris ut aliquam. Donec purus odio, molestie id suscipit sit</div>
<div class="p" style="left:118.15px;top:842.30px;word-spacing:1.747px;">amet, porttitor in erat. Vestibulum ut tellus vel mi lobortis porta nec vel tellus. Quisque pretium</div>
<div class="p" style="left:118.15px;top:860.59px;word-spacing:0.633px;">blandit dignissim. Proin eu metus convallis sapien efficitur mollis. Nunc luctus ex in nunc ornare,</div>
<div class="p" style="left:118.15px;top:878.88px;word-spacing:3.423px;">nec blandit orci faucibus. Aenean bibendum mi vel neque euismod hendrerit. Vestibulum ac</div>
<div class="p" style="left:118.15px;top:897.17px;word-spacing:0.804px;">pharetra magna. Ut rutrum, orci at blandit faucibus, justo mauris iaculis mauris, ut tempor lectus</div>
<div class="p" style="left:118.15px;top:915.46px;">risus at ligula.</div>
<div class="p" style="left:118.15px;top:950.61px;word-spacing:1.135px;">Duis non tincidunt purus. Nam quis sapien risus. Donec mattis convallis tempor. Fusce aliquam</div>
<div class="p" style="left:118.15px;top:968.90px;word-spacing:3.003px;">aliquet eros, nec rutrum lectus pretium at. Praesent blandit justo a mi dignissim placerat. Ut</div>
<div class="p" style="left:118.15px;top:987.19px;word-spacing:0.027px;">ullamcorper elit eget diam maximus iaculis. In bibendum in massa eget facilisis. In iaculis lectus</div>
</div>
<div class="a" style="left:0px;top:38px;width:1720px;height:56px;background:#2c5529;box-shadow:0 2px 5px rgba(0,0,0,.13)"></div>
<div class="a" style="left:0px;top:38px;width:1720px;height:0.5px;background:#10300e"></div>
<svg class="a" style="left:15.500px;top:57.500px;width:17px;height:20px" viewBox="0 0 34 40"><path d="M33.100 1.600C26 4 17 10 12 18c-3 5-3 12-1.200 16.100C17 33 24 29 28 23c4-6 5-14 5.100-21.400z" fill="#fff"/><path d="M1.200 19.900C.8 26 3 33 8.700 37.200 8.500 31 5.500 24.500 1.200 19.900z" fill="#fff"/><path d="M12.800 32L8.200 39.600l1.300.3 4-6.900z" fill="#fff"/><path d="M11 33.500C15 24 21 15 28.500 8" fill="none" stroke="#2c5529" stroke-width="1"/><path d="M8.200 36.500C6.500 31 4.500 26 2 21.500" fill="none" stroke="#2c5529" stroke-width=".7"/></svg>
<span class="t" style="left:48.40px;top:56.00px;font-size:16.4px;color:#fff;letter-spacing:-0.091px;-webkit-text-stroke:0.14px #fff;">Paperless-ngx</span>
<div class="a" style="left:310.5px;top:50.4px;width:509.5px;height:30.7px;background:rgba(0,0,0,.15);border:1px solid rgba(255,255,255,.27);border-radius:5px;box-sizing:border-box"></div>
<svg class="a" style="left:320px;top:58.9px;width:13.8px;height:13.8px;" viewBox="0 0 16 16" fill="#ccd7cb"><path d="M11.742 10.344a6.5 6.5 0 1 0-1.397 1.398h-.001c.03.04.062.078.098.115l3.850 3.850a1 1 0 0 0 1.415-1.414l-3.850-3.850a1.007 1.007 0 0 0-.115-.1zM12 6.500a5.500 5.500 0 1 1-11 0 5.500 5.500 0 0 1 11 0z"/></svg>
<span class="t" style="left:340.80px;top:57.00px;font-size:14.6px;color:#86a184;letter-spacing:-0.093px;-webkit-text-stroke:0.14px #86a184;">Search documents</span>
<svg class="a" style="left:1672px;top:56.7px;width:21px;height:21px;" viewBox="0 0 16 16" fill="#f4f6f4"><path d="M11 6a3 3 0 1 1-6 0 3 3 0 0 1 6 0z"/><path fill-rule="evenodd" d="M0 8a8 8 0 1 1 16 0A8 8 0 0 1 0 8zm8-7a7 7 0 0 0-5.468 11.370C3.242 11.226 4.805 10 8 10s4.757 1.225 5.468 2.370A7 7 0 0 0 8 1z"/></svg>
<svg class="a" style="left:1698.95px;top:64.8px;width:8.7px;height:4.4px" viewBox="0 0 10 5"><path d="M0 0h10L5 5z" fill="#fff"/></svg>
</div></div>
</body></html>
